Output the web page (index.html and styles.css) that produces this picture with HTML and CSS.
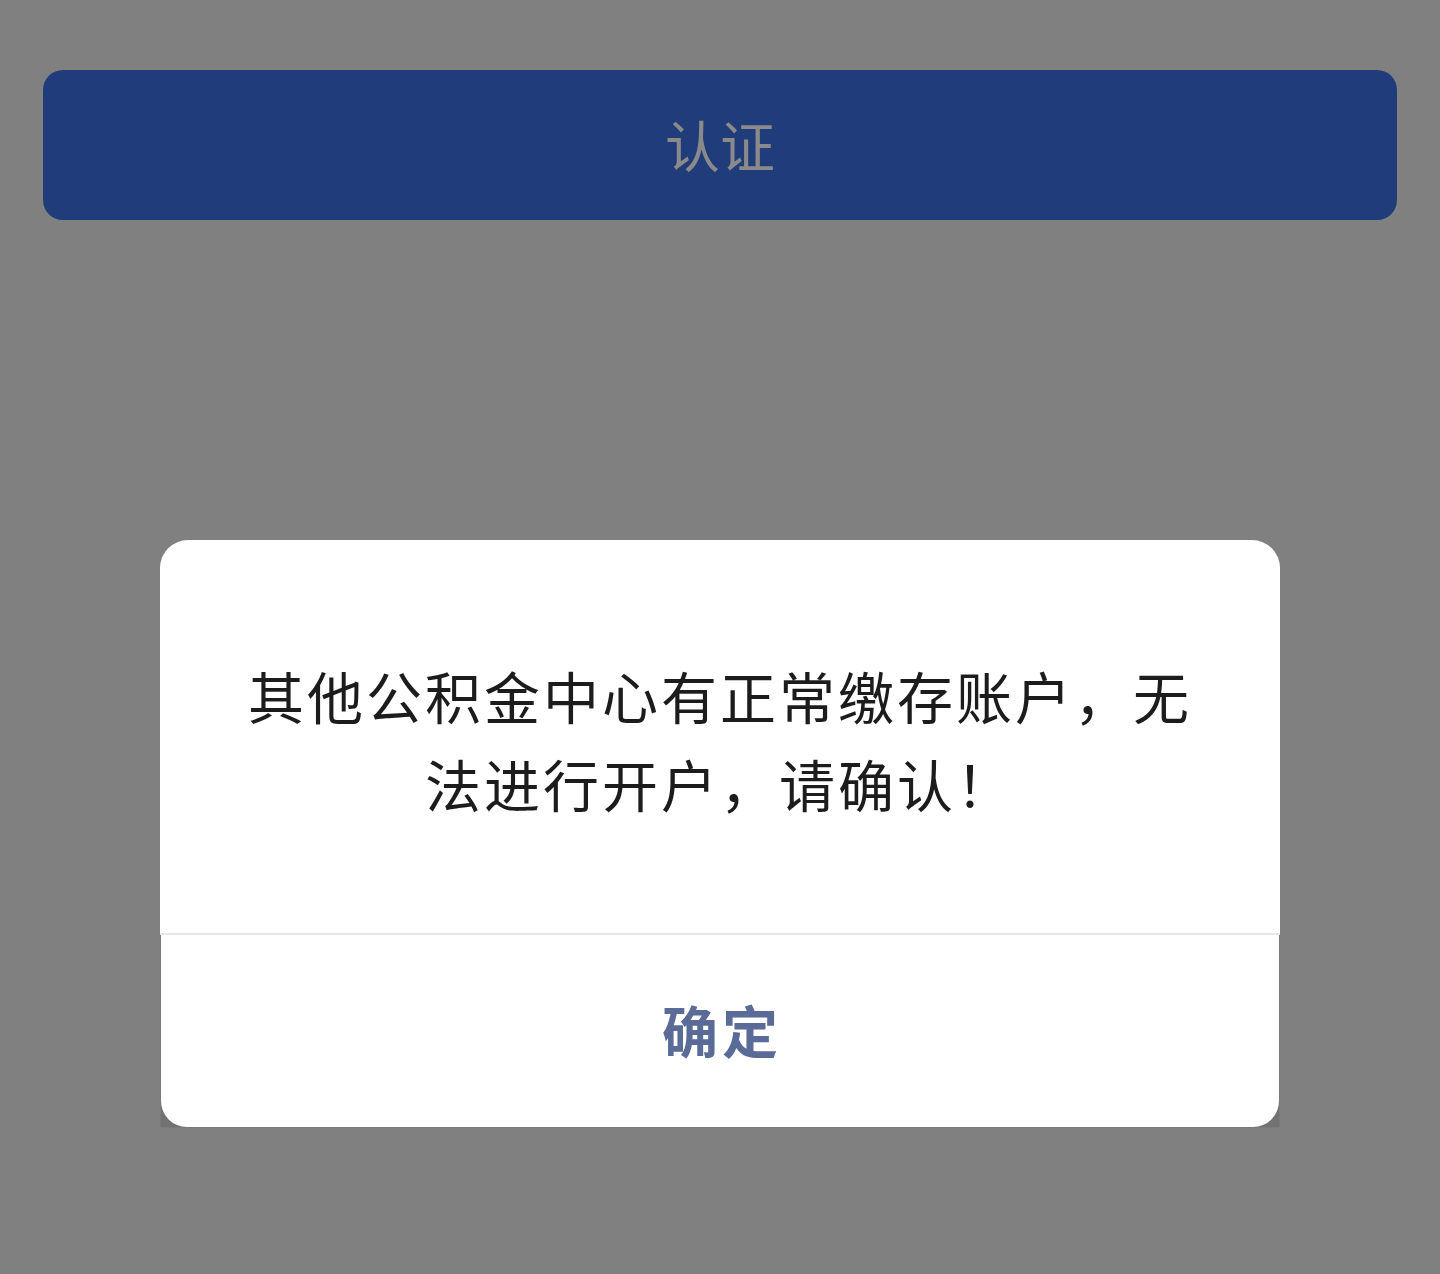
FILE: index.html
```html
<!DOCTYPE html>
<html lang="zh-CN">
<head>
<meta charset="utf-8">
<title>认证</title>
<link rel="stylesheet" href="styles.css">
</head>
<body>
<main class="page">
  <button class="submit-btn" type="button">认证</button>
</main>
<div class="mask">
  <div class="dialog">
    <div class="dialog-body">
      <p class="dialog-msg">其他公积金中心有正常缴存账户，无法进行开户，请确认！</p>
    </div>
    <div class="dialog-footer">
      <button class="dialog-ok" type="button">确定</button>
    </div>
  </div>
</div>
</body>
</html>
```
FILE: styles.css
```css
html, body {
  margin: 0;
  padding: 0;
}
body {
  width: 1440px;
  height: 1274px;
  background: #808080;
  font-family: "Noto Sans CJK SC", "Noto Sans", sans-serif;
  overflow: hidden;
}
.page {
  padding: 70px 43px 0;
}
.submit-btn {
  display: flex;
  align-items: center;
  justify-content: center;
  width: 100%;
  height: 150px;
  border: none;
  border-radius: 20px;
  background: #213c7b;
  color: #8a8a8a;
  font-family: inherit;
  font-size: 55px;
  letter-spacing: 0;
  padding: 0 0 4px;
}
.mask {
  position: fixed;
  inset: 0;
  display: flex;
  justify-content: center;
  align-items: flex-start;
  padding-top: 540px;
}
.dialog {
  width: 1120px;
  background: transparent;
}
.dialog-body {
  background: #ffffff;
  border-radius: 28px 28px 0 0;
  padding: 111px 80px 106px;
  border-bottom: 2px solid #e6e6e6;
}
.dialog-msg {
  margin: 0;
  text-align: center;
  font-size: 56px;
  line-height: 88px;
  letter-spacing: 3px;
  color: #1c1c1c;
}
.dialog-footer {
  height: 193px;
  background: #727272;
  border: 1px solid #7a7a7a;
  border-top: none;
  box-sizing: border-box;
  display: flex;
}
.dialog-ok {
  flex: 1;
  border: none;
  background: #ffffff;
  border-radius: 0 0 26px 26px;
  color: #5b6b98;
  font-family: inherit;
  font-size: 56px;
  font-weight: 700;
  letter-spacing: 4px;
  padding: 0 0 6px 4px;
}
```
